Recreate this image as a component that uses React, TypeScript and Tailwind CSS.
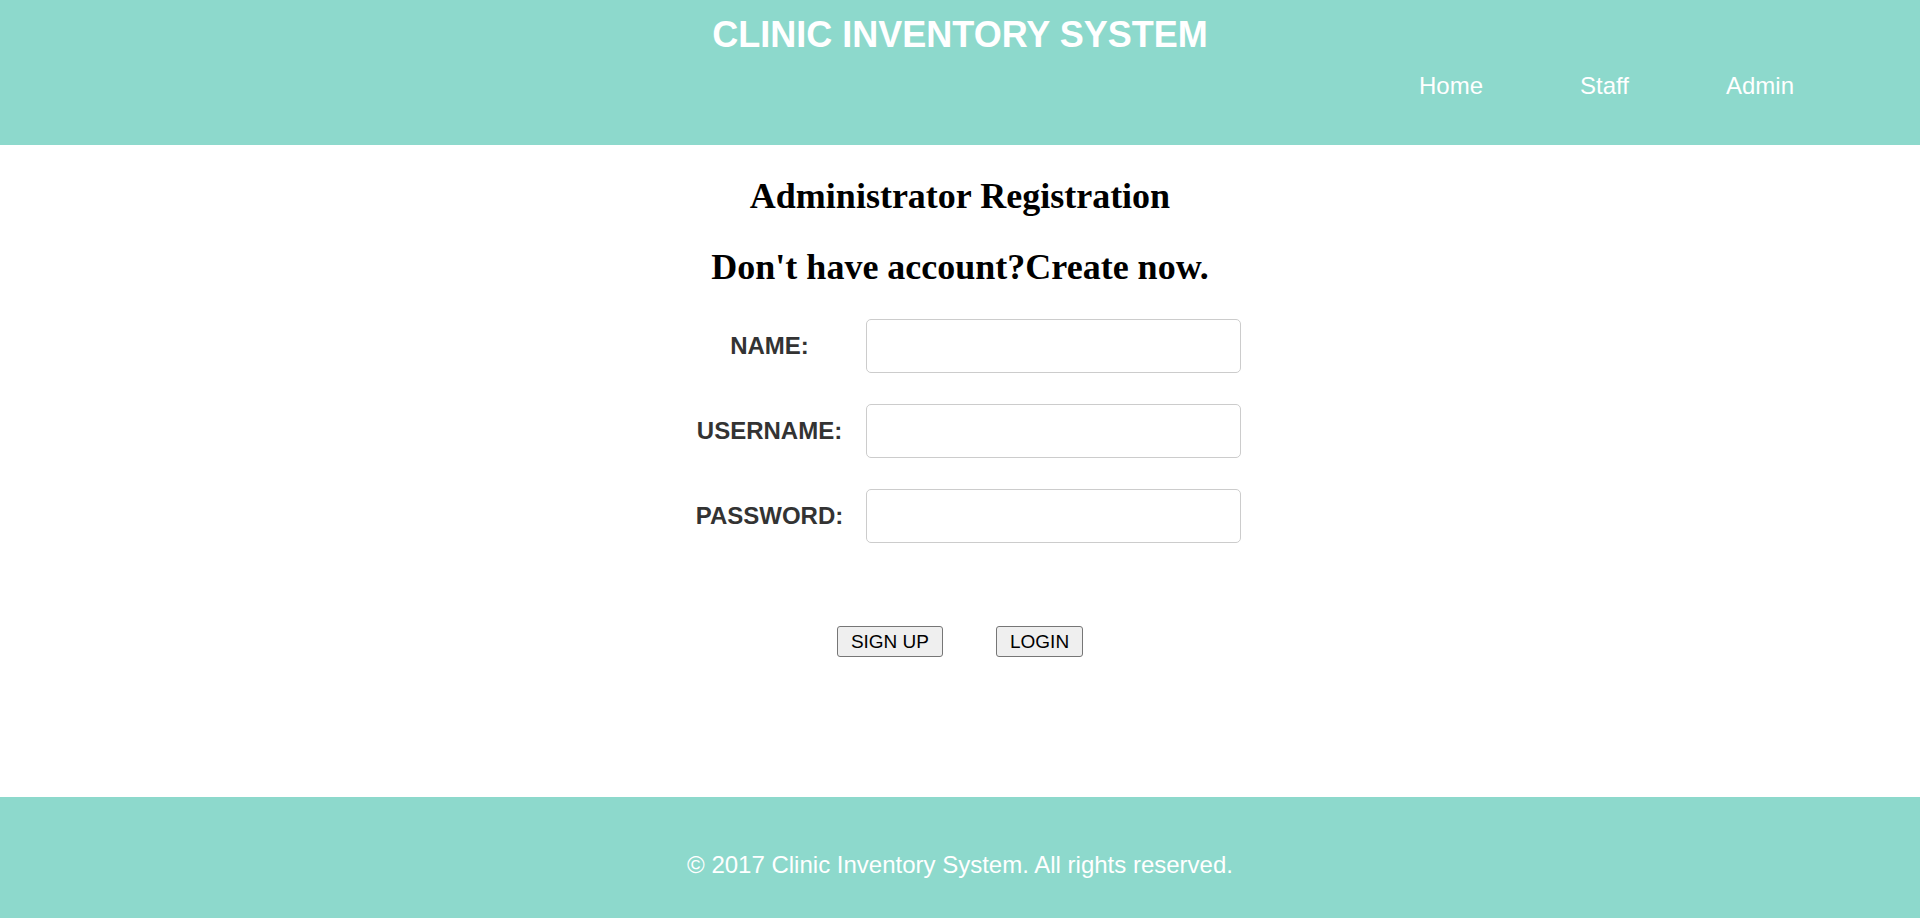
import { type ReactNode } from 'react'

const sans = { fontFamily: '"Liberation Sans", Arial, sans-serif' }

function Field({ label, type = 'text' }: { label: string; type?: string }): ReactNode {
  return (
    <div className="flex items-center gap-[9px]">
      <label className="w-[174px] text-center text-[24px] font-bold text-[#333]">{label}</label>
      <input
        type={type}
        className="h-[54px] w-[375px] rounded-[5px] border border-[#ccc] bg-white px-3 text-[18px] outline-none"
      />
    </div>
  )
}

export default function App(): ReactNode {
  return (
    <div className="flex min-h-screen flex-col bg-white" style={sans}>
      <header className="h-[145px] bg-[#8dd9cc] pt-[14px] text-white">
        <h1 className="text-center text-[36px] font-bold leading-[41px]">CLINIC INVENTORY SYSTEM</h1>
        <nav className="mt-[17px] flex justify-end gap-[97px] pr-[126px] text-[24px] leading-[28px]">
          <a href="#">Home</a>
          <a href="#">Staff</a>
          <a href="#">Admin</a>
        </nav>
      </header>

      <main className="flex-1 pt-[31px]">
        <div className="text-center font-['Liberation_Serif',serif] text-[36px] font-bold leading-[41px] text-black">
          <h2>Administrator Registration</h2>
          <h2 className="mt-[30px]">Don't have account?Create now.</h2>
        </div>

        <form className="mt-[31px] flex justify-center pl-[3px]" onSubmit={(e) => e.preventDefault()}>
          <div className="flex flex-col gap-[31px]">
            <Field label="NAME:" />
            <Field label="USERNAME:" />
            <Field label="PASSWORD:" type="password" />
          </div>
        </form>

        <div className="mt-[83px] flex justify-center gap-[53px]">
          <button className="h-[31px] rounded-[3px] border border-[#767676] bg-[#efefef] px-[13px] text-[19px] leading-none text-black">
            SIGN UP
          </button>
          <button className="h-[31px] rounded-[3px] border border-[#767676] bg-[#efefef] px-[13px] text-[19px] leading-none text-black">
            LOGIN
          </button>
        </div>
      </main>

      <footer className="h-[121px] bg-[#8dd9cc] pt-[54px] text-center text-[24px] leading-[28px] text-white">
        © 2017 Clinic Inventory System. All rights reserved.
      </footer>
    </div>
  )
}
